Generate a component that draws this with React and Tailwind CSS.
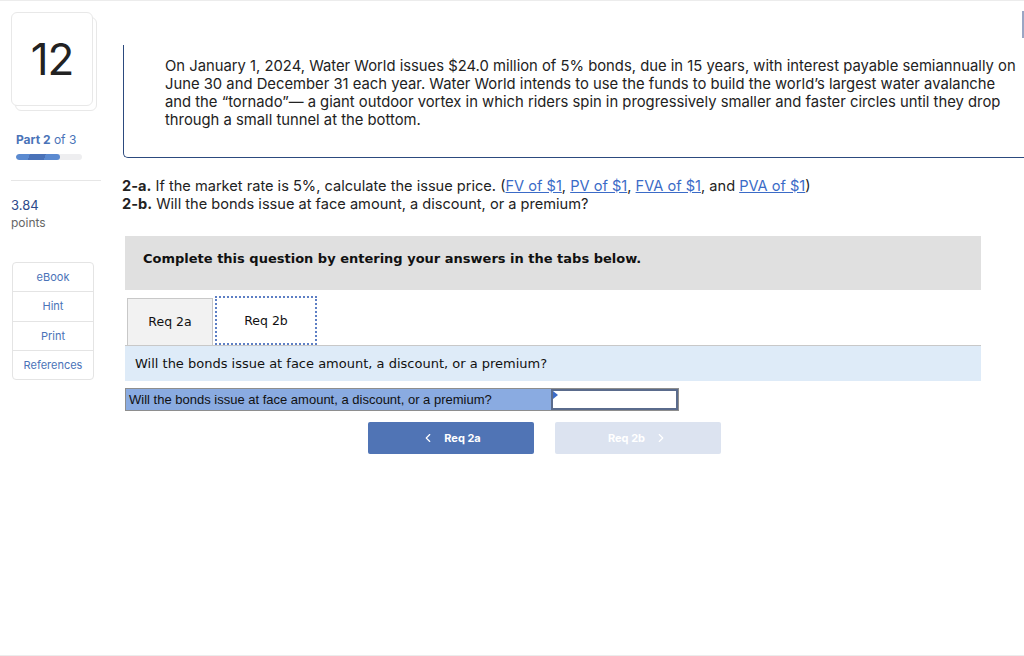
import React from "react";
import { ChevronLeft, ChevronRight } from "lucide-react";

const sans = { fontFamily: 'Inter, "Open Sans", "Liberation Sans", sans-serif' };

export default function App() {
  return (
    <div className="relative w-[1024px] h-[656px] bg-white overflow-hidden border-t border-b border-[#ececec]" style={sans}>
      <div className="flex">
        {/* Sidebar */}
        <div className="w-[110px] shrink-0 pl-[11px] pt-[11px]">
          <div className="relative w-[87px] h-[99px]">
            <div className="absolute left-[4px] top-[5px] w-[82px] h-[94px] rounded-[6px] border border-[#e8e8e8] bg-white"></div>
            <div className="absolute left-0 top-0 w-[82px] h-[94px] rounded-[6px] border border-[#e8e8e8] bg-white flex items-center justify-center">
              <span className="text-[44px] leading-none text-[#222] tracking-[-1px]">12</span>
            </div>
          </div>
          <div className="mt-[23px] pl-[5px] text-[12px] leading-none text-[#4a73b8]">
            <span className="font-bold">Part 2</span> of 3
          </div>
          <div className="ml-[5px] mt-[8px] w-[66px] h-[6px] rounded-full bg-[#eeeef0] overflow-hidden">
            <div className="w-[44px] h-full rounded-full bg-[linear-gradient(110deg,#5b8ad0_0%,#5b8ad0_30%,#4a72b8_30%,#4a72b8_65%,#5b8ad0_65%)]"></div>
          </div>
          <div className="mt-[20px] w-[90px] border-t border-[#e6e6e6]"></div>
          <div className="mt-[16px] text-[13px] leading-[17px] text-[#2d4a8a]">3.84</div>
          <div className="text-[12px] leading-[17px] text-[#666]">points</div>
          <div className="mt-[31px] ml-[1px] w-[82px] rounded-[4px] border border-[#e4e4e4] text-[11px] text-[#4a73b8] text-center">
            <div className="h-[29px] flex items-center justify-center border-b border-[#e4e4e4]">eBook</div>
            <div className="h-[30px] flex items-center justify-center border-b border-[#e4e4e4]">Hint</div>
            <div className="h-[29px] flex items-center justify-center border-b border-[#e4e4e4]">Print</div>
            <div className="h-[28px] flex items-center justify-center">References</div>
          </div>
        </div>

        {/* Main */}
        <div className="flex-1 pt-[44px]">
          <div className="ml-[13px] h-[113px] border-l border-b border-[#2c4a7e] rounded-bl-[5px] pl-[41px] pt-[12px] pr-[6px]">
            <p className="text-[14.8px] leading-[18px] text-[#222]">
              On January 1, 2024, Water World issues $24.0 million of 5% bonds, due in 15 years, with interest payable semiannually on June 30 and December 31 each year. Water World intends to use the funds to build the world’s largest water avalanche and the “tornado”— a giant outdoor vortex in which riders spin in progressively smaller and faster circles until they drop through a small tunnel at the bottom.
            </p>
          </div>

          <div className="ml-[12px] mt-[19px] text-[14.6px] leading-[18px] text-[#222]">
            <div>
              <span className="font-bold">2-a.</span> If the market rate is 5%, calculate the issue price. (
              <a className="text-[#3b6bc7] underline">FV of $1</a>,{" "}
              <a className="text-[#3b6bc7] underline">PV of $1</a>,{" "}
              <a className="text-[#3b6bc7] underline">FVA of $1</a>, and{" "}
              <a className="text-[#3b6bc7] underline">PVA of $1</a>)
            </div>
            <div>
              <span className="font-bold">2-b.</span> Will the bonds issue at face amount, a discount, or a premium?
            </div>
          </div>

          <div className="ml-[15px] w-[856px] mt-[23px]" style={{ fontFamily: '"DejaVu Sans", Verdana, sans-serif' }}>
            <div className="h-[54px] bg-[#e0e0e0] pl-[18px] pt-[13px] text-[13px] font-bold text-[#111]">
              Complete this question by entering your answers in the tabs below.
            </div>
            <div className="mt-[6px] flex items-end h-[49px] pl-[2px]">
              <div className="w-[86px] h-[47px] bg-[#f2f2f2] border border-[#c8c8c8] border-b-0 flex items-center justify-center text-[12.5px] text-[#111]">
                Req 2a
              </div>
              <div className="ml-[2px] w-[102px] h-[49px] bg-white border-2 border-dotted border-[#5d7fc4] flex items-center justify-center pt-[2px] text-[12.5px] text-[#111]">
                Req 2b
              </div>
            </div>
            <div className="h-[36px] bg-[#deebf8] border-t border-[#c8c8c8] flex items-center pl-[10px] text-[13px] text-[#111]">
              Will the bonds issue at face amount, a discount, or a premium?
            </div>
            <div className="mt-[7px] flex h-[23px] w-[554px] border border-[#8e8e8e]" style={{ fontFamily: '"Liberation Sans", Arial, sans-serif' }}>
              <div className="w-[425px] bg-[#8aabe1] flex items-center pl-[3px] text-[13px] text-[#111]">
                Will the bonds issue at face amount, a discount, or a premium?
              </div>
              <div className="relative flex-1 bg-white border-2 border-[#5a6b8c]">
                <div className="absolute left-0 top-0 w-0 h-0 border-t-[4px] border-b-[4px] border-l-[5px] border-t-transparent border-b-transparent border-l-[#3b6bc7]"></div>
              </div>
            </div>
            <div className="mt-[11px] flex gap-[21px] pl-[243px]" style={sans}>
              <button className="w-[166px] h-[32px] rounded-[2px] bg-[#5074b5] text-white text-[11px] font-bold flex items-center justify-center">
                <ChevronLeft size={14} strokeWidth={2} className="mr-[9px]" />Req 2a
              </button>
              <button className="w-[166px] h-[32px] rounded-[2px] bg-[#dce3f0] text-white text-[11px] font-bold flex items-center justify-center">
                Req 2b<ChevronRight size={14} strokeWidth={2} className="ml-[9px]" />
              </button>
            </div>
          </div>
        </div>
      </div>
      <div className="absolute right-0 top-[10px] w-[2px] h-[27px] bg-[#9aa6c4]"></div>
    </div>
  );
}
